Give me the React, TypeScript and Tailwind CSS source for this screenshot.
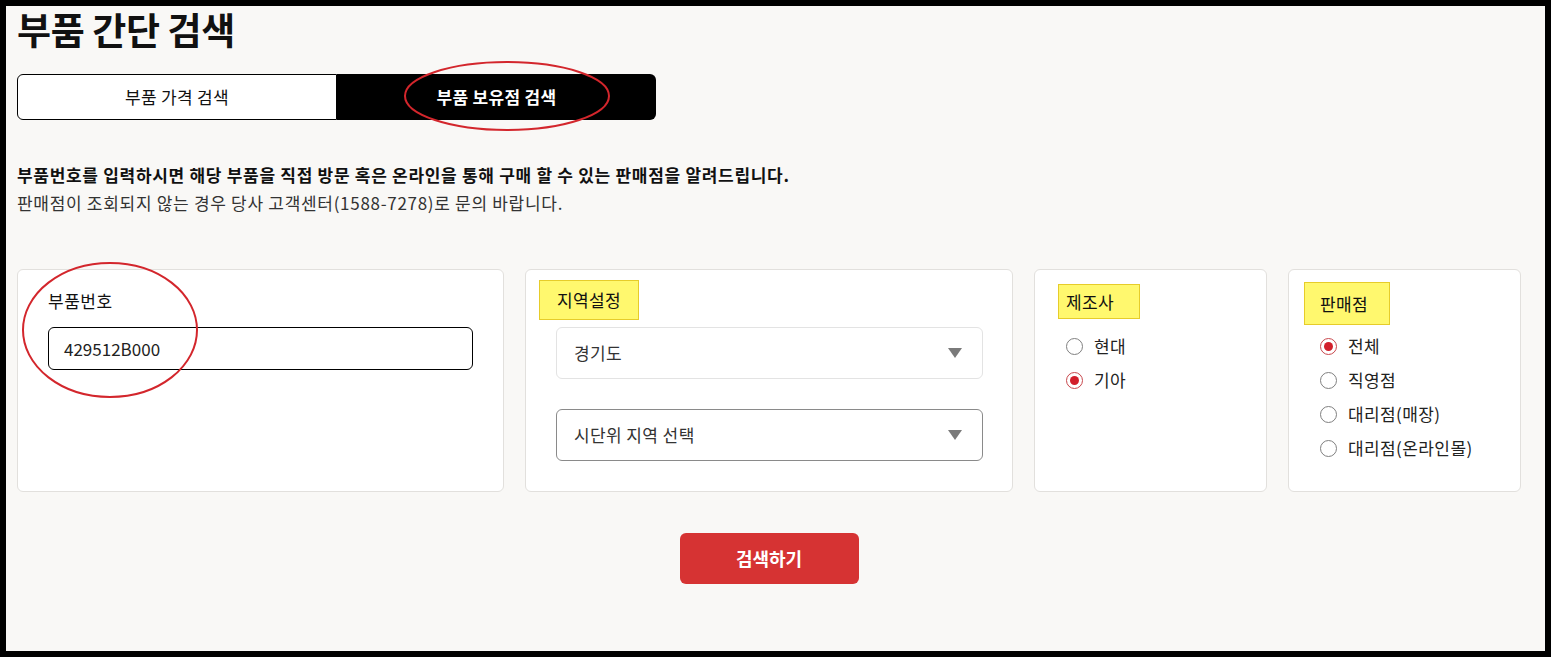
import React from "react";

const font = { fontFamily: '"Noto Sans CJK KR", "Noto Sans", sans-serif' };

function Radio({ checked, label }: { checked?: boolean; label: string }) {
  return (
    <div className="flex h-[34px] items-center gap-[11px]">
      {checked ? (
        <span className="flex h-[17px] w-[17px] items-center justify-center rounded-full border border-[#c8474c] bg-white">
          <span className="h-[9px] w-[9px] rounded-full bg-[#d21f2b]" />
        </span>
      ) : (
        <span className="h-[17px] w-[17px] rounded-full border border-[#808080] bg-white" />
      )}
      <span className="text-[17px] leading-[20px] tracking-[0.4px] text-[#222]">{label}</span>
    </div>
  );
}

function Caret() {
  return (
    <svg width="14" height="10" viewBox="0 0 14 10">
      <path d="M0 0 L14 0 L7 10 Z" fill="#7a7a7a" />
    </svg>
  );
}

export default function App() {
  return (
    <div className="h-[657px] w-[1551px] bg-black p-[6px]" style={font}>
      <div className="relative h-full bg-[#f9f8f6] pl-[11px] pr-[24px]">
        <h1 className="pt-[1px] text-[37px] font-bold leading-[44px] tracking-[-0.4px] text-[#111]">
          부품 간단 검색
        </h1>

        <div className="mt-[23px] flex h-[46px] w-[639px]">
          <div className="flex w-[320px] items-center justify-center rounded-l-[6px] border border-black bg-white text-[17px] tracking-[0.3px] text-[#111]">
            부품 가격 검색
          </div>
          <div className="flex flex-1 items-center justify-center rounded-r-[6px] bg-black text-[17px] font-bold tracking-[0.3px] text-white">
            부품 보유점 검색
          </div>
        </div>

        <p className="mt-[41px] text-[17px] font-bold leading-[28px] tracking-[0.7px] text-[#111]">
          부품번호를 입력하시면 해당 부품을 직접 방문 혹은 온라인을 통해 구매 할 수 있는 판매점을 알려드립니다.
        </p>
        <p className="text-[17px] leading-[28px] tracking-[0.7px] text-[#333]">
          판매점이 조회되지 않는 경우 당사 고객센터(1588-7278)로 문의 바랍니다.
        </p>

        <div className="mt-[52px] flex gap-[21px]">
          {/* 부품번호 */}
          <div className="h-[223px] w-[487px] rounded-[6px] border border-[#e2e0dd] bg-white px-[30px] pt-[21px]">
            <div className="text-[17px] leading-[20px] tracking-[0.5px] text-[#111]">부품번호</div>
            <div className="mt-[16px] flex h-[43px] w-[425px] items-center rounded-[6px] border border-black px-[15px] text-[17px] text-[#222]">
              429512B000
            </div>
          </div>

          {/* 지역설정 */}
          <div className="h-[223px] w-[488px] rounded-[6px] border border-[#e2e0dd] bg-white pl-[13px] pt-[10px]">
            <div className="flex h-[40px] w-[100px] items-center border border-[#e6cc2a] bg-[#fff86e] pl-[17px] text-[17px] tracking-[0.4px] text-[#111]">
              지역설정
            </div>
            <div className="ml-[17px] mt-[7px] flex h-[52px] w-[427px] items-center justify-between rounded-[6px] border border-[#e3e3e3] bg-white pl-[17px] pr-[20px] text-[17px] tracking-[0.4px] text-[#333]">
              <span>경기도</span>
              <Caret />
            </div>
            <div className="ml-[17px] mt-[30px] flex h-[52px] w-[427px] items-center justify-between rounded-[6px] border border-[#8a8a8a] bg-white pl-[17px] pr-[20px] text-[17px] tracking-[0.4px] text-[#333]">
              <span>시단위 지역 선택</span>
              <Caret />
            </div>
          </div>

          {/* 제조사 */}
          <div className="h-[223px] w-[233px] rounded-[6px] border border-[#e2e0dd] bg-white pl-[23px] pt-[14px]">
            <div className="flex h-[35px] w-[82px] items-center border border-[#e6cc2a] bg-[#fff86e] pl-[7px] text-[17px] tracking-[0.4px] text-[#111]">
              제조사
            </div>
            <div className="ml-[8px] mt-[10px] flex flex-col">
              <Radio label="현대" />
              <Radio label="기아" checked />
            </div>
          </div>

          {/* 판매점 */}
          <div className="h-[223px] w-[233px] rounded-[6px] border border-[#e2e0dd] bg-white pl-[15px] pt-[12px]">
            <div className="flex h-[43px] w-[86px] items-center border border-[#e6cc2a] bg-[#fff86e] pl-[15px] text-[17px] tracking-[0.4px] text-[#111]">
              판매점
            </div>
            <div className="ml-[16px] mt-[4px] flex flex-col">
              <Radio label="전체" checked />
              <Radio label="직영점" />
              <Radio label="대리점(매장)" />
              <Radio label="대리점(온라인몰)" />
            </div>
          </div>
        </div>

        <div className="mt-[41px] flex justify-center">
          <button className="flex h-[51px] w-[179px] items-center justify-center rounded-[6px] bg-[#d63333] text-[18px] font-bold text-white">
            검색하기
          </button>
        </div>

        {/* red annotation ellipses */}
        <svg
          className="pointer-events-none absolute left-0 top-0"
          width="1539"
          height="645"
          viewBox="0 0 1539 645"
        >
          <ellipse cx="501" cy="90" rx="102" ry="34" fill="none" stroke="#d3262c" strokeWidth="2" />
          <ellipse cx="104" cy="324" rx="87" ry="67" fill="none" stroke="#d3262c" strokeWidth="2" />
        </svg>
      </div>
    </div>
  );
}
